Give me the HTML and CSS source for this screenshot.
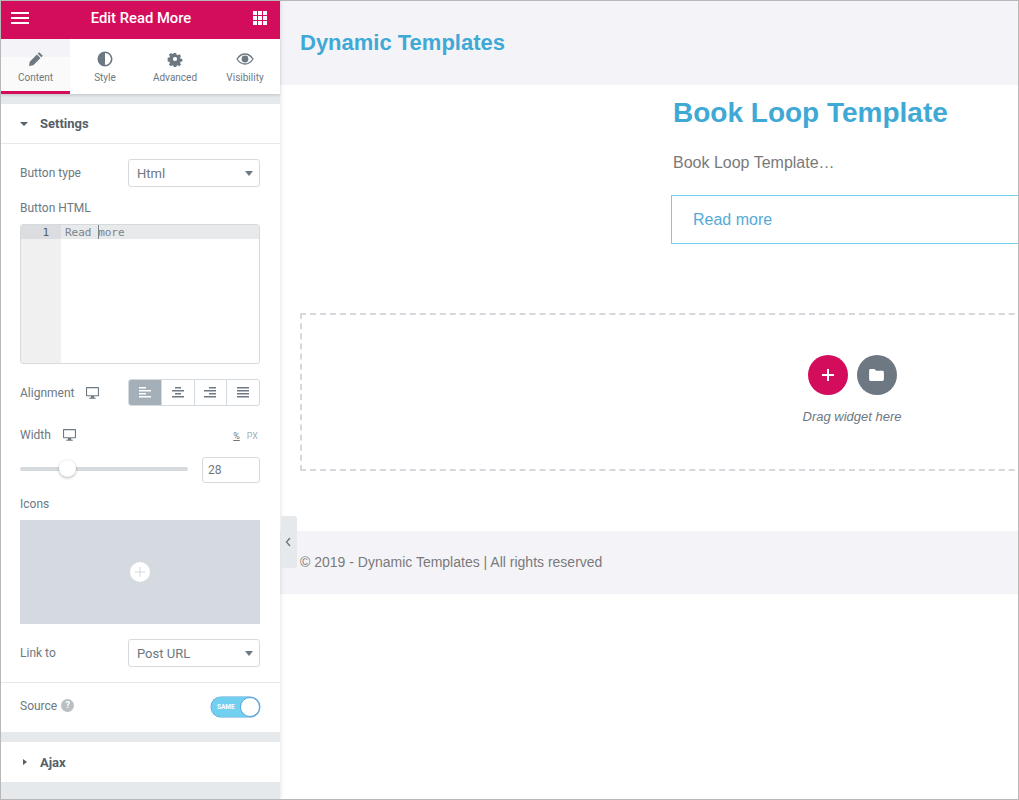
FILE: index.html
```html
<!DOCTYPE html>
<html lang="en">
<head>
<meta charset="utf-8">
<title>Edit Read More</title>
<link rel="stylesheet" href="styles.css">
</head>
<body>
<div class="frame">
  <aside class="panel">
    <header class="topbar">
      <svg class="ico-menu" viewBox="0 0 18 14"><path d="M0 1h18v2H0zM0 6h18v2H0zM0 11h18v2H0z" fill="#fff"/></svg>
      <div class="topbar-title">Edit Read More</div>
      <svg class="ico-grid" viewBox="0 0 14 14"><path d="M0 0h4v4H0zM5 0h4v4H5zM10 0h4v4h-4zM0 5h4v4H0zM5 5h4v4H5zM10 5h4v4h-4zM0 10h4v4H0zM5 10h4v4H5zM10 10h4v4h-4z" fill="#fff"/></svg>
    </header>
    <nav class="tabs">
      <div class="tab tab-active">
        <svg class="tab-ico" viewBox="0 0 16 16"><path d="M11.2 1.200l3.600 3.600-1.500 1.500-3.600-3.600zM8.900 3.500l3.600 3.600-7.200 7.200-4.300.7.700-4.300z" fill="#6d7882"/></svg>
        <span>Content</span>
      </div>
      <div class="tab">
        <svg class="tab-ico" viewBox="0 0 16 16"><circle cx="8" cy="8" r="6.700" fill="none" stroke="#6d7882" stroke-width="1.600"/><path d="M8 1.300a6.700 6.700 0 0 0 0 13.400z" fill="#6d7882"/></svg>
        <span>Style</span>
      </div>
      <div class="tab">
        <svg class="tab-ico" viewBox="0 0 16 16"><path fill="#6d7882" fill-rule="evenodd" d="M6.600 1h2.800l.4 2 1.300.6 1.800-1.100 2 2-1.100 1.800.6 1.300 2 .4v2.800l-2 .4-.6 1.300 1.100 1.800-2 2-1.800-1.100-1.300.6-.4 2H6.600l-.4-2-1.300-.6-1.800 1.100-2-2 1.100-1.800-.6-1.300-2-.4V6.600l2-.4.600-1.300-1.100-1.800 2-2 1.800 1.100 1.300-.6zM8 5.600a2.400 2.400 0 1 0 0 4.800 2.400 2.400 0 0 0 0-4.800z" transform="translate(1 1) scale(.875)"/></svg>
        <span>Advanced</span>
      </div>
      <div class="tab">
        <svg class="tab-ico tab-ico-wide" viewBox="0 0 18 12"><path d="M1 6c2-3 5-5 8-5s6 2 8 5c-2 3-5 5-8 5s-6-2-8-5z" fill="none" stroke="#6d7882" stroke-width="1.300"/><circle cx="9" cy="6" r="3.400" fill="#6d7882"/></svg>
        <span>Visibility</span>
      </div>
    </nav>
    <div class="gap gap-top"></div>
    <section class="section">
      <div class="section-head">
        <i class="caret-down"></i><span>Settings</span>
      </div>
      <div class="controls">
        <div class="row row-type">
          <label class="lbl">Button type</label>
          <div class="select">Html<i class="select-caret"></i></div>
        </div>
        <label class="lbl lbl-block">Button HTML</label>
        <div class="editor">
          <div class="gutter"><div class="gutter-line">1</div></div>
          <div class="code"><div class="code-line">Read <b class="cursor"></b>more</div></div>
        </div>
        <div class="row row-align">
          <label class="lbl lbl-ico">Alignment
            <svg class="ico-desktop" viewBox="0 0 12 11"><path fill="#6d7882" fill-rule="evenodd" d="M.8 0h10.400c.4 0 .8.4.8.8v6.900c0 .4-.4.8-.8.8H7.500v1.300H9v1H3v-1h1.500V8.500H.8c-.4 0-.8-.4-.8-.8V.8C0 .4.4 0 .8 0zM1 1v6.500h10V1z"/></svg>
          </label>
          <div class="choices">
            <div class="choice choice-on"><svg viewBox="0 0 12 11"><path d="M0 0h7v1.600H0zM0 3h12v1.600H0zM0 6h7v1.600H0zM0 9h12v1.600H0z" fill="#fff"/></svg></div>
            <div class="choice"><svg viewBox="0 0 12 11"><path d="M3 0h6v1.600H3zM0 3h12v1.600H0zM3 6h6v1.600H3zM0 9h12v1.600H0z" fill="#6d7882"/></svg></div>
            <div class="choice"><svg viewBox="0 0 12 11"><path d="M5 0h7v1.600H5zM0 3h12v1.600H0zM5 6h7v1.600H5zM0 9h12v1.600H0z" fill="#6d7882"/></svg></div>
            <div class="choice"><svg viewBox="0 0 12 11"><path d="M0 0h12v1.600H0zM0 3h12v1.600H0zM0 6h12v1.600H0zM0 9h12v1.600H0z" fill="#6d7882"/></svg></div>
          </div>
        </div>
        <div class="row row-width">
          <label class="lbl lbl-ico">Width
            <svg class="ico-desktop" viewBox="0 0 12 11"><path fill="#6d7882" fill-rule="evenodd" d="M.8 0h10.400c.4 0 .8.4.8.8v6.900c0 .4-.4.8-.8.8H7.500v1.300H9v1H3v-1h1.500V8.500H.8c-.4 0-.8-.4-.8-.8V.8C0 .4.4 0 .8 0zM1 1v6.500h10V1z"/></svg>
          </label>
          <div class="units"><span class="unit-on">%</span><span>PX</span></div>
        </div>
        <div class="row row-slider">
          <div class="slider"><div class="thumb"></div></div>
          <div class="num">28</div>
        </div>
        <label class="lbl lbl-block lbl-icons">Icons</label>
        <div class="media"><div class="media-add"><svg viewBox="0 0 10 10"><path d="M4.500 0h1v4.500H10v1H5.500V10h-1V5.500H0v-1h4.500z" fill="#d5dadf"/></svg></div></div>
        <div class="row row-link">
          <label class="lbl">Link to</label>
          <div class="select">Post URL<i class="select-caret"></i></div>
        </div>
      </div>
      <div class="row row-source">
        <label class="lbl lbl-ico lbl-source">Source <span class="help">?</span></label>
        <div class="switch"><span>SAME</span><i></i></div>
      </div>
    </section>
    <div class="gap"></div>
    <section class="section section-ajax">
      <div class="section-head section-head-plain">
        <i class="caret-right"></i><span>Ajax</span>
      </div>
    </section>
    <div class="panel-rest"></div>
    <div class="handle"><svg viewBox="0 0 6 10"><path d="M5 1L1.500 5 5 9" fill="none" stroke="#6d7882" stroke-width="1.400"/></svg></div>
  </aside>
  <main class="preview">
    <div class="site-header"><a class="site-title">Dynamic Templates</a></div>
    <div class="post">
      <h2 class="post-title">Book Loop Template</h2>
      <p class="post-text">Book Loop Template&hellip;</p>
      <a class="post-btn">Read more</a>
    </div>
    <div class="dropzone">
      <div class="dz-buttons">
        <div class="dz-btn dz-add"><svg viewBox="0 0 12 12"><path d="M5 0h2v5h5v2H7v5H5V7H0V5h5z" fill="#fff"/></svg></div>
        <div class="dz-btn dz-tpl"><svg viewBox="0 0 16 13"><path d="M1.500 0h4.300l1.700 2h7c.8 0 1.500.7 1.500 1.500v8c0 .8-.7 1.500-1.500 1.500h-13C.7 13 0 12.300 0 11.500v-10C0 .7.700 0 1.500 0z" fill="#fff"/></svg></div>
      </div>
      <div class="dz-text">Drag widget here</div>
    </div>
    <div class="site-footer">© 2019 - Dynamic Templates | All rights reserved</div>
  </main>
</div>
</body>
</html>
```
FILE: styles.css
```css
* { box-sizing: border-box; }
html, body { margin: 0; height: 100%; background: #fff; overflow: hidden; }
.frame { width: 1019px; height: 800px; display: flex; border: 1px solid #b8b8b8; overflow: hidden; }

.panel { position: relative; width: 279px; flex: none; display: flex; flex-direction: column; background: #e6e9ec; box-shadow: 0 0 5px rgba(0,0,0,.14); z-index: 2; font-family: Roboto, sans-serif; color: #6d7882; }
.topbar { height: 38px; flex: none; background: #d30c5c; display: flex; align-items: center; justify-content: space-between; padding: 0 13px 5px 10px; color: #fff; }
.ico-menu { width: 18px; height: 14px; }
.ico-grid { width: 14px; height: 14px; }
.topbar-title { font-size: 14.800px; font-weight: 500; }

.tabs { height: 55px; flex: none; display: flex; background: #fff; box-shadow: 0 2px 2px rgba(0,0,0,.1); }
.tab { width: 70px; flex: none; display: flex; flex-direction: column; align-items: center; padding-top: 12px; font-size: 10px; color: #6d7882; gap: 5px; }
.tab-active { width: 69px; border-bottom: 3px solid #d30c5c; background: linear-gradient(#f4f4f8 0 18px, #fafafa 18px); }
.tab-ico { width: 16px; height: 16px; flex: none; }
.tab-ico-wide { width: 18px; }

.gap { height: 10px; flex: none; }
.section { background: #fff; flex: none; }
.section-head { height: 40px; display: flex; align-items: center; gap: 12px; padding-left: 19px; font-size: 13px; font-weight: 700; color: #556068; border-bottom: 1px solid #e6e9ec; }
.section-head-plain { border-bottom: 0; padding-left: 22px; gap: 13px; }
.caret-down { width: 0; height: 0; border: 4px solid transparent; border-top: 4px solid #556068; border-bottom: 0; }
.caret-right { width: 0; height: 0; border: 3.500px solid transparent; border-left: 4px solid #556068; border-right: 0; }

.controls { padding: 15px 20px 15px 19px; }
.row { display: flex; align-items: center; justify-content: space-between; }
.lbl { font-size: 12px; color: #6d7882; }
.lbl-block { display: block; }
.lbl-ico { display: flex; align-items: center; gap: 12px; }
.select { position: relative; width: 132px; height: 28px; border: 1px solid #d5dadf; border-radius: 3px; font-size: 13px; line-height: 27px; padding-left: 8px; color: #6d7882; }
.select-caret { position: absolute; right: 6px; top: 11px; width: 0; height: 0; border: 4px solid transparent; border-top: 5px solid #6d7882; border-bottom: 0; }
.row-type { height: 28px; }
.lbl-block { margin-top: 13px; height: 16px; line-height: 16px; }
.editor { display: flex; height: 140px; margin-top: 8px; border: 1px solid #d5dadf; border-radius: 3px; overflow: hidden; font-family: "DejaVu Sans Mono", monospace; font-size: 11px; }
.gutter { width: 40px; background: #f0f0f0; flex: none; }
.gutter-line { height: 14px; line-height: 16px; background: #dcdde0; text-align: right; padding-right: 12px; color: #555c63; }
.code { flex: 1; }
.code-line { height: 14px; line-height: 16px; background: #e8e9eb; padding-left: 4px; color: #7a838b; white-space: pre; }
.cursor { display: inline-block; width: 1px; height: 14px; background: #7a838b; vertical-align: top; margin-right: -1px; }
.row-align { height: 27px; margin-top: 15px; }
.choices { display: flex; width: 132px; height: 27px; border: 1px solid #d5dadf; border-radius: 3px; overflow: hidden; }
.choice { flex: 1; display: flex; align-items: center; justify-content: center; border-left: 1px solid #d5dadf; }
.choice:first-child { border-left: 0; }
.choice svg { width: 12px; height: 11px; }
.choice-on { background: #a4afb7; }
.ico-desktop { width: 13px; height: 12px; }
.row-width { height: 16px; margin-top: 21px; }
.units { display: flex; gap: 7px; font-size: 9px; color: #a4afb7; padding: 2px 2px 0 0; }
.unit-on { color: #6d7882; text-decoration: underline; }
.row-slider { height: 26px; margin-top: 13px; }
.slider { position: relative; width: 168px; height: 4px; border-radius: 2px; background: #d5dadf; }
.thumb { position: absolute; left: 39px; top: -7px; width: 17px; height: 17px; border-radius: 50%; background: #fff; box-shadow: 0 1px 3px rgba(0,0,0,.3); }
.num { width: 58px; height: 26px; margin-top: 2px; border: 1px solid #d5dadf; border-radius: 3px; font-size: 12px; line-height: 24px; padding-left: 5px; }
.lbl-icons { margin-top: 14px; }
.media { height: 104px; margin-top: 8px; background: #d5d9e0; display: flex; align-items: center; justify-content: center; }
.media-add { width: 20px; height: 20px; border-radius: 50%; background: #fff; display: flex; align-items: center; justify-content: center; }
.media-add svg { width: 10px; height: 10px; }
.row-link { height: 28px; margin-top: 15px; }
.row-source { height: 50px; padding: 0 20px 2px 19px; border-top: 1px solid #e6e9ec; }
.lbl-source { margin-top: -2px; }
.help { width: 13px; height: 13px; border-radius: 50%; background: #babfc2; color: #fff; font-size: 9px; font-weight: 700; text-align: center; line-height: 13px; margin-left: -8px; }
.switch { position: relative; width: 49px; height: 20px; border-radius: 10px; background: #71d0f0; color: #fff; font-size: 6.500px; font-weight: 700; line-height: 20px; padding-left: 6px; box-shadow: 0 0 0 .5px #5b9fd8; }
.switch i { position: absolute; right: 0; top: 0; width: 20px; height: 20px; border-radius: 50%; background: #fff; border: 1px solid #5b9fd8; }
.section-ajax { height: 40px; }
.section-ajax .section-head { height: 40px; }
.panel-rest { flex: 1; }
.handle { position: absolute; left: 280px; top: 515px; width: 16px; height: 52px; padding-right: 3px; background: #e6e9ec; border-radius: 0 3px 3px 0; display: flex; align-items: center; justify-content: center; }
.handle svg { width: 6px; height: 10px; }

.preview { flex: 1; min-width: 0; font-family: "Liberation Sans", Arial, sans-serif; color: #7a7a7a; overflow: hidden; }
.site-header { height: 84px; background: #f4f4f8; padding: 29px 20px 0; }
.site-title { font-size: 22px; font-weight: 700; line-height: 26px; color: #3fa9d5; }
.post { padding-left: 391px; }
.post-title { margin: 11px 0 0 2px; font-size: 28px; line-height: 34px; font-weight: 700; color: #3fa9d5; }
.post-text { margin: 23px 0 0 2px; font-size: 16px; line-height: 19px; color: #7a7a7a; }
.post-btn { display: block; height: 49px; margin-top: 23px; padding-left: 21px; border: 1px solid #71d0f0; border-right: 0; font-size: 16px; line-height: 47px; color: #54aad6; }
.dropzone { width: 1104px; height: 158px; margin: 69px 0 0 20px; border: 2px dashed #d5d8dc; display: flex; flex-direction: column; align-items: center; padding-top: 40px; }
.dz-buttons { display: flex; gap: 9px; }
.dz-btn { width: 40px; height: 40px; border-radius: 50%; display: flex; align-items: center; justify-content: center; }
.dz-add { background: #d30c5c; }
.dz-add svg { width: 12px; height: 12px; }
.dz-tpl { background: #6d7882; }
.dz-tpl svg { width: 15px; height: 12px; }
.dz-text { margin-top: 14px; font-size: 13px; font-style: italic; color: #6d7882; }
.site-footer { height: 63px; margin-top: 60px; background: #f4f4f8; padding-left: 20px; font-size: 14px; line-height: 63px; color: #7a7a7a; }
```
